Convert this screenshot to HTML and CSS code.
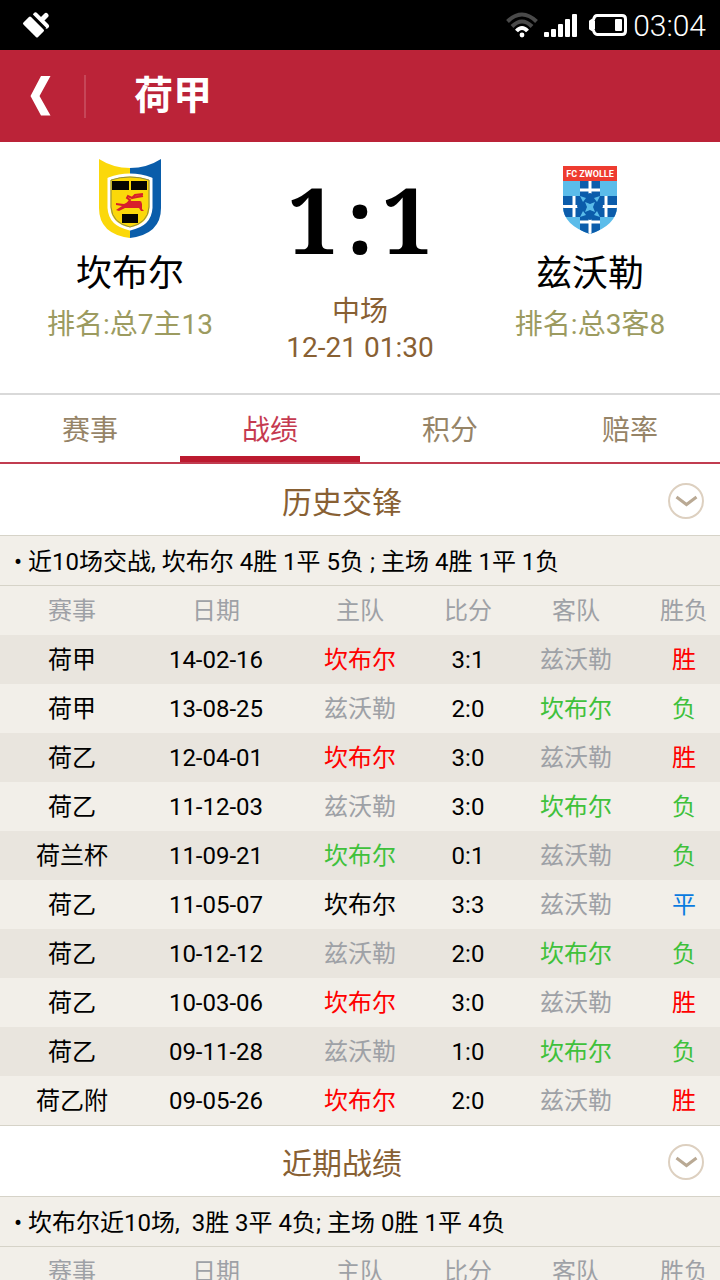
FILE: index.html
```html
<!DOCTYPE html>
<html lang="zh-CN">
<head>
    <meta charset="UTF-8">
    <meta name="viewport" content="width=device-width, initial-scale=1.0">
    <title>荷甲 坎布尔 1:1 兹沃勒</title>
    <link rel="stylesheet" href="styles.css">
</head>
<body>
    <div class="statusbar">
        <svg class="brush" width="28" height="28" viewBox="0 0 28 28">
            <path d="M8 7L20.500 19.500L15 25L2.500 12.500Z" fill="#fff" stroke="#fff" stroke-width="3" stroke-linejoin="round"/>
            <path d="M13.500 4L24.500 15M19 9.500L24 4.500" fill="none" stroke="#fff" stroke-width="5" stroke-linecap="round"/>
            <path d="M9.500 3.500L23.500 17.500" fill="none" stroke="#000" stroke-width="2"/>
        </svg>
        <div class="status-right">
            <svg width="32" height="26" viewBox="0 0 32 26" fill="none" stroke-width="4">
                <path d="M1.500 9.500Q16-4.500 30.500 9.500" stroke="#4a4a4a"/>
                <path d="M6 14.500Q16 4.500 26 14.500" stroke="#4a4a4a"/>
                <path d="M10.500 19Q16 13 21.500 19" stroke="#fff"/>
                <circle cx="16" cy="23" r="2.400" fill="#fff"/>
            </svg>
            <svg width="34" height="24" viewBox="0 0 34 24" fill="#fff">
                <rect x="0" y="19" width="5" height="5" rx="1"/>
                <rect x="7" y="16" width="5" height="8" rx="1"/>
                <rect x="14" y="11" width="5" height="13" rx="1"/>
                <rect x="21" y="6" width="5" height="18" rx="1"/>
                <rect x="28" y="1" width="5" height="23" rx="1"/>
            </svg>
            <svg class="battery" width="38" height="22" viewBox="0 0 38 22">
                <path d="M8 1.500H33Q36.500 1.500 36.500 5V17Q36.500 20.500 33 20.500H8Q5.500 20.500 4.500 16.500L1.500 14.500V7.500L4.500 5.500Q5.500 1.500 8 1.500Z" fill="none" stroke="#fff" stroke-width="3"/>
                <rect x="1" y="7" width="5" height="8" fill="#fff"/>
                <rect x="26" y="5" width="7" height="12" rx="1" fill="#fff"/>
            </svg>
            <span class="time">03:04</span>
        </div>
    </div>

    <header class="topbar">
        <button class="back" aria-label="返回">
            <svg width="22" height="40" viewBox="0 0 22 40" fill="#fff"><path d="M11 0H20.500L9.500 20L20.500 39.500H11L0.500 20Z"/></svg>
        </button>
        <h1>荷甲</h1>
    </header>

    <section class="match">
        <div class="team">
            <svg class="crest" width="64" height="80" viewBox="0 0 64 80">
                <path d="M1 0Q15 9 32 9V79Q1 75 1 49Z" fill="#fbd80a"/>
                <path d="M63 0Q49 9 32 9V79Q63 75 63 49Z" fill="#0a5daa"/>
                <path d="M11 20Q21 16 32 16Q43 16 53 20V49Q52 66 32 70Q12 66 11 49Z" fill="#fbd80a" stroke="#fff" stroke-width="3"/>
                <path d="M13 21Q22 18 32 18Q42 18 51 21V48Q50 64 32 68Q14 64 13 48Z" fill="none" stroke="#8d8a45" stroke-width="1"/>
                <path d="M14 22H31V31H14ZM33 22H49V31H33ZM24 55H40V64H24Z" fill="#050500"/>
                <path d="M18 44L26 45L30 43L41 43L43 42L44 45L44 50L46 52L43 52L41 49L31 49L27 49L21 52L18 51L24 47L18 46Z" fill="#d81e2b"/>
                <path d="M29 45L32 41L29 39L30 37L34 39L37 36L45 35M34 39L39 38L45 37M32 43H42" fill="none" stroke="#d81e2b" stroke-width="2"/>
            </svg>
            <h2>坎布尔</h2>
            <p class="rank">排名:总7主13</p>
        </div>
        <div class="result">
            <p class="score"><span>1</span><span>:</span><span>1</span></p>
            <p class="state">中场</p>
            <p class="state">12-21 01:30</p>
        </div>
        <div class="team">
            <svg class="crest" width="64" height="80" viewBox="0 0 64 80">
                <clipPath id="shield"><path d="M5 7H59V47Q59 66 32 75Q5 66 5 47Z"/></clipPath>
                <g clip-path="url(#shield)">
                    <rect width="64" height="80" fill="#5bbcea"/>
                    <path d="M22 22H42V80H22ZM5 37H59V58H5Z" fill="#0b5cab"/>
                    <path d="M22 31H42M5 47.500H59M22 63H42M16 37V58M48 37V58M32 22V75" stroke="#fff" stroke-width="3"/>
                    <path d="M22 37L32 34L42 37L45 47L42 58L32 61L22 58L19 47Z" fill="#0b5cab"/>
                    <path d="M22 37L28 39L25 43ZM42 37L36 39L39 43ZM22 58L28 56L25 52ZM42 58L36 56L39 52Z" fill="#5bbcea"/>
                    <path d="M27 43L32 45L37 43L35 48L37 53L32 51L27 53L29 48Z" fill="#5bbcea"/>
                    <rect x="5" y="7" width="54" height="15" fill="#ee3b30"/>
                </g>
                <text class="crest-name" x="32" y="18" text-anchor="middle">FC ZWOLLE</text>
            </svg>
            <h2>兹沃勒</h2>
            <p class="rank">排名:总3客8</p>
        </div>
    </section>

    <nav class="tabs">
        <a href="#">赛事</a>
        <a href="#" class="active">战绩</a>
        <a href="#">积分</a>
        <a href="#">赔率</a>
    </nav>

    <main>
        <div class="section-title">
            <h3>历史交锋</h3>
            <button class="toggle" aria-label="收起历史交锋">
                <svg width="36" height="36" viewBox="0 0 36 36" fill="none"><circle cx="18" cy="18" r="17" stroke="#ddd0c0" stroke-width="2"/><path d="M8.500 14L18.500 21.500L28.500 14" stroke="#b9a994" stroke-width="3"/></svg>
            </button>
        </div>
        <p class="summary">• 近10场交战, 坎布尔 4胜 1平 5负 ; 主场 4胜 1平 1负</p>
        <table>
            <thead>
                <tr><th class="wide">赛事</th><th class="wide">日期</th><th class="wide">主队</th><th>比分</th><th class="wide">客队</th><th>胜负</th></tr>
            </thead>
            <tbody>
                <tr><td>荷甲</td><td>14-02-16</td><td class="win">坎布尔</td><td>3:1</td><td class="other">兹沃勒</td><td class="win">胜</td></tr>
                <tr><td>荷甲</td><td>13-08-25</td><td class="other">兹沃勒</td><td>2:0</td><td class="lose">坎布尔</td><td class="lose">负</td></tr>
                <tr><td>荷乙</td><td>12-04-01</td><td class="win">坎布尔</td><td>3:0</td><td class="other">兹沃勒</td><td class="win">胜</td></tr>
                <tr><td>荷乙</td><td>11-12-03</td><td class="other">兹沃勒</td><td>3:0</td><td class="lose">坎布尔</td><td class="lose">负</td></tr>
                <tr><td>荷兰杯</td><td>11-09-21</td><td class="lose">坎布尔</td><td>0:1</td><td class="other">兹沃勒</td><td class="lose">负</td></tr>
                <tr><td>荷乙</td><td>11-05-07</td><td>坎布尔</td><td>3:3</td><td class="other">兹沃勒</td><td class="draw">平</td></tr>
                <tr><td>荷乙</td><td>10-12-12</td><td class="other">兹沃勒</td><td>2:0</td><td class="lose">坎布尔</td><td class="lose">负</td></tr>
                <tr><td>荷乙</td><td>10-03-06</td><td class="win">坎布尔</td><td>3:0</td><td class="other">兹沃勒</td><td class="win">胜</td></tr>
                <tr><td>荷乙</td><td>09-11-28</td><td class="other">兹沃勒</td><td>1:0</td><td class="lose">坎布尔</td><td class="lose">负</td></tr>
                <tr><td>荷乙附</td><td>09-05-26</td><td class="win">坎布尔</td><td>2:0</td><td class="other">兹沃勒</td><td class="win">胜</td></tr>
            </tbody>
        </table>

        <div class="section-title next">
            <h3>近期战绩</h3>
            <button class="toggle" aria-label="收起近期战绩">
                <svg width="36" height="36" viewBox="0 0 36 36" fill="none"><circle cx="18" cy="18" r="17" stroke="#ddd0c0" stroke-width="2"/><path d="M8.500 14L18.500 21.500L28.500 14" stroke="#b9a994" stroke-width="3"/></svg>
            </button>
        </div>
        <p class="summary">• 坎布尔近10场,&nbsp; 3胜 3平 4负; 主场 0胜 1平 4负</p>
        <table>
            <thead>
                <tr><th class="wide">赛事</th><th class="wide">日期</th><th class="wide">主队</th><th>比分</th><th class="wide">客队</th><th>胜负</th></tr>
            </thead>
        </table>
    </main>
</body>
</html>
```
FILE: styles.css
```css
* {
    box-sizing: border-box;
}
body {
    margin: 0;
    height: 100vh;
    display: flex;
    flex-direction: column;
    overflow: hidden;
    background: #fff;
    color: #000;
    font-family: Roboto, "Noto Sans CJK SC", sans-serif;
    font-size: 24px;
}
h1, h2, h3, p {
    margin: 0;
    font-weight: normal;
}
button {
    border: 0;
    padding: 0;
    background: none;
    display: flex;
    align-items: center;
    cursor: pointer;
}

/* status bar */
.statusbar {
    flex: none;
    height: 50px;
    padding: 0 14px 0 22px;
    background: #000;
    display: flex;
    justify-content: space-between;
    align-items: center;
}
.status-right {
    display: flex;
    align-items: center;
    gap: 6px;
}
.battery {
    margin-left: 5px;
}
.time {
    color: #fff;
    font-size: 30px;
    font-weight: 300;
}

/* title bar */
.topbar {
    flex: none;
    height: 92px;
    background: #bb2338;
    color: #fff;
    display: flex;
    align-items: center;
}
.back {
    width: 86px;
    height: 43px;
    padding-left: 30px;
    border-right: 2px solid #c64658;
}
.topbar h1 {
    margin-left: 48px;
    font-size: 39px;
    line-height: 44px;
    font-weight: bold;
}

/* match info */
.match {
    flex: none;
    display: grid;
    grid-template-columns: 13fr 10fr 13fr;
    padding: 17px 0 24px;
    text-align: center;
    border-bottom: 2px solid #d9d9d9;
}
.crest {
    display: block;
    margin: 0 auto 8px;
}
.crest-name {
    font: bold 9px Roboto, sans-serif;
    fill: #fff;
}
.team h2 {
    font-size: 36px;
    line-height: 54px;
}
.rank {
    font-size: 28px;
    line-height: 48px;
    padding-bottom: 20px;
    color: #9c9b60;
}
.score {
    display: flex;
    justify-content: center;
    gap: 8px;
    padding-bottom: 15px;
    font-family: "Noto Serif", "Liberation Serif", serif;
    font-size: 90px;
    line-height: 120px;
    font-weight: bold;
}
.state {
    font-size: 28px;
    line-height: 36px;
    color: #886033;
}

/* tabs */
.tabs {
    flex: none;
    display: flex;
    height: 69px;
    border-bottom: 2px solid #c13c50;
}
.tabs a {
    flex: 1;
    padding-top: 6px;
    border-bottom: 6px solid transparent;
    font-size: 28px;
    line-height: 60px;
    text-align: center;
    text-decoration: none;
    color: #968467;
}
.tabs .active {
    color: #c53a50;
    border-color: #bc1a2f;
}

main {
    flex: 1;
    min-height: 0;
    overflow: hidden;
}
.section-title {
    display: flex;
    align-items: center;
    height: 72px;
    padding: 2px 16px 0;
    border-bottom: 1px solid #d6d3c8;
}
.next {
    border-top: 1px solid #d6d3c8;
}
.section-title h3 {
    flex: 1;
    padding-top: 4px;
    font-size: 30px;
    line-height: 40px;
    text-align: center;
    color: #886033;
}
.summary {
    height: 50px;
    padding-left: 14px;
    background: #f2efe9;
    border-bottom: 1px solid #d6d3c8;
    line-height: 52px;
    white-space: nowrap;
}

table {
    width: 100%;
    table-layout: fixed;
    border-collapse: collapse;
    text-align: center;
}
tr {
    background: #f2efe9;
}
tbody tr:nth-child(odd) {
    background: #e9e5de;
}
th, td {
    padding: 1px 0 0;
    line-height: 48px;
    font-weight: normal;
    white-space: nowrap;
}
.wide {
    width: 20%;
}
th, .other {
    color: #9ea1a6;
}
.win {
    color: #f00;
}
.lose {
    color: #3fc13b;
}
.draw {
    color: #0a7be0;
}
```
